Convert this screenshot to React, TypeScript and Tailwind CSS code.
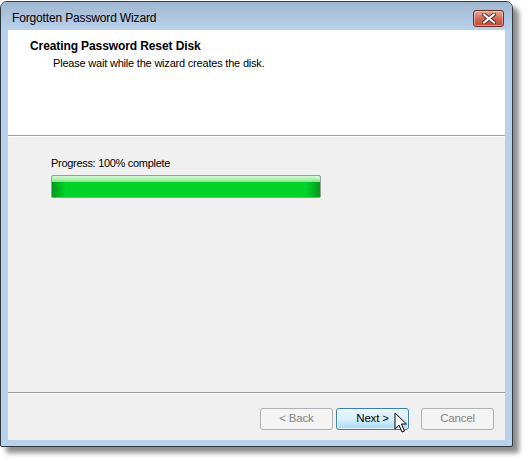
import React from 'react';

const CloseButton = () => (
  <div className="w-[31px] h-[17px] rounded-[3px] border border-[#6e2b22] bg-gradient-to-b from-[#e6a99c] via-[#cf6a57] to-[#c24a34] shadow-[inset_0_0_0_1px_rgba(255,220,210,0.5)] flex items-center justify-center">
    <svg width="14" height="11" viewBox="0 0 14 11">
      <path d="M2 1.5 L12 9.5 M12 1.5 L2 9.5" stroke="#5a2a25" strokeWidth="4" strokeLinecap="square" />
      <path d="M2 1.5 L12 9.5 M12 1.5 L2 9.5" stroke="#ffffff" strokeWidth="2" strokeLinecap="square" />
    </svg>
  </div>
);

const WizButton = ({ label, disabled, active }: { label: string; disabled?: boolean; active?: boolean }) => (
  <div
    className={`w-[73px] h-[22px] rounded-[3px] border flex items-center justify-center text-[11.5px] tracking-[-0.2px] ${
      active
        ? 'border-[#3c7fb1] bg-gradient-to-b from-[#eaf6fd] via-[#d9f0fc] to-[#a7d9f5] text-black shadow-[inset_0_0_0_1px_rgba(255,255,255,0.7)]'
        : disabled
        ? 'border-[#adb2b5] bg-[#f4f4f4] text-[#838383]'
        : 'border-[#707070] bg-[#ececec] text-black'
    }`}
  >
    {label}
  </div>
);

const Cursor = () => (
  <svg className="absolute left-[394px] top-[412px]" width="14" height="22" viewBox="0 0 14 22">
    <path
      d="M1 1 L1 17 L5 13 L8 20 L10.5 19 L7.5 12 L12.5 12 Z"
      fill="#ffffff"
      stroke="#000000"
      strokeWidth="1"
      strokeLinejoin="miter"
    />
  </svg>
);

export default function App() {
  return (
    <div className="relative w-[528px] h-[462px] bg-white pt-px font-['Liberation_Sans',Arial,sans-serif]">
      <div className="w-[513px] h-[446px] rounded-t-[7px] rounded-b-[2px] border border-[#2e3843] bg-[#b9d1ea] shadow-[6px_6px_5px_rgba(0,0,0,0.45)] flex flex-col">
        {/* title bar */}
        <div className="h-[28px] flex justify-between pl-[11px] pr-[8px] rounded-t-[6px] bg-gradient-to-b from-[#9fb7d0] to-[#b9d1ea]">
          <span className="text-[12px] leading-[14px] pt-[9px] tracking-[-0.15px] text-black">Forgotten Password Wizard</span>
          <div className="pt-[8px]">
            <CloseButton />
          </div>
        </div>

        <div className="flex-1 mx-[7px] mb-[6px] flex flex-col bg-[#f0f0f0]">
          {/* header */}
          <div className="h-[106px] bg-white border-b border-[#a0a0a0] pt-[9px]">
            <div className="pl-[22px] text-[12px] leading-[14px] font-bold tracking-[-0.1px] text-black">Creating Password Reset Disk</div>
            <div className="pl-[45px] pt-[3px] text-[11px] leading-[14px] tracking-[-0.2px] text-black">Please wait while the wizard creates the disk.</div>
          </div>
          <div className="h-px bg-white" />

          {/* body */}
          <div className="flex-1 pl-[43px] pt-[19px]">
            <div className="text-[11px] leading-[14px] tracking-[-0.3px] text-black">Progress: 100% complete</div>
            <div className="mt-[5px] w-[270px] h-[23px] rounded-[2px] border border-[#9c9c9c] bg-[#00d22a] overflow-hidden">
              <div className="relative h-full">
                <div className="absolute left-0 top-0 bottom-0 w-[14px] bg-gradient-to-r from-[#009a1c] to-transparent" />
                <div className="absolute right-0 top-0 bottom-0 w-[14px] bg-gradient-to-l from-[#009a1c] to-transparent" />
                <div className="absolute left-0 right-0 top-0 h-[6px] bg-gradient-to-b from-[#d6f8d6] to-[#7fe98c]" />
              </div>
            </div>
          </div>

          {/* footer */}
          <div className="h-px bg-[#a0a0a0]" />
          <div className="h-px bg-white" />
          <div className="h-[46px] flex justify-end items-start pt-[14px] pr-[11px]">
            <WizButton label="< Back" disabled />
            <div className="w-[3px]" />
            <WizButton label="Next >" active />
            <div className="w-[12px]" />
            <WizButton label="Cancel" disabled />
          </div>
        </div>
      </div>
      <Cursor />
    </div>
  );
}
